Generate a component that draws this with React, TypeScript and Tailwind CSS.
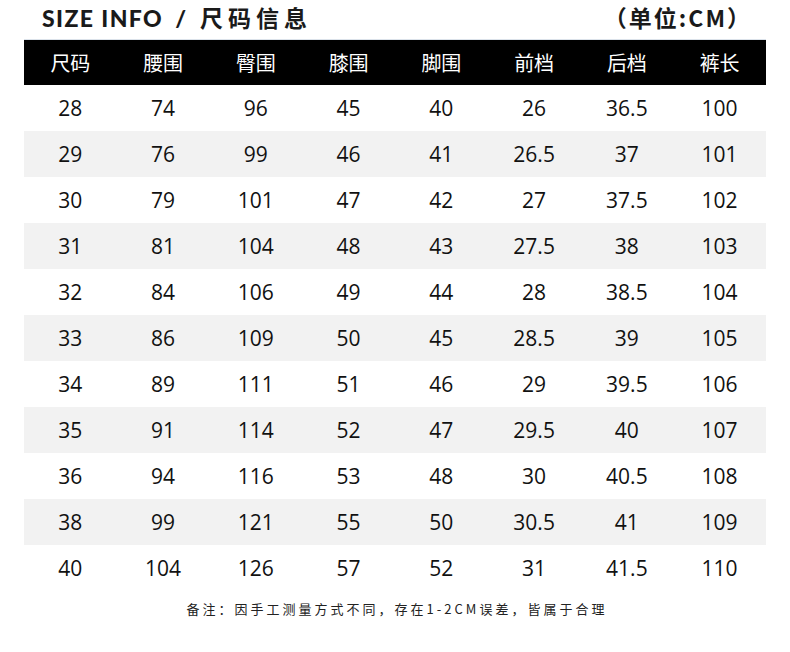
const headers = ['尺码', '腰围', '臀围', '膝围', '脚围', '前档', '后档', '裤长'];

const rows: (string | number)[][] = [
  [28, 74, 96, 45, 40, 26, '36.5', 100],
  [29, 76, 99, 46, 41, '26.5', 37, 101],
  [30, 79, 101, 47, 42, 27, '37.5', 102],
  [31, 81, 104, 48, 43, '27.5', 38, 103],
  [32, 84, 106, 49, 44, 28, '38.5', 104],
  [33, 86, 109, 50, 45, '28.5', 39, 105],
  [34, 89, 111, 51, 46, 29, '39.5', 106],
  [35, 91, 114, 52, 47, '29.5', 40, 107],
  [36, 94, 116, 53, 48, 30, '40.5', 108],
  [38, 99, 121, 55, 50, '30.5', 41, 109],
  [40, 104, 126, 57, 52, 31, '41.5', 110],
];

const cjk = "font-['Microsoft_YaHei','Noto_Sans_CJK_SC',sans-serif]";

export default function App() {
  return (
    <div className="w-[790px] h-[652px] bg-white text-[#111]">
      {/* Title bar */}
      <div className="h-[39px] flex items-start justify-between pt-[3px] pl-[42px] pr-[38px]">
        <h1 className="flex items-baseline text-[#1a1a1a] text-[23px] font-black leading-[28px]">
          <span className="font-['Lato',sans-serif] tracking-[1.4px]">SIZE INFO</span>
          <span className="font-['Lato',sans-serif] ml-[12px] mr-[14px]">/</span>
          <span className={`${cjk} font-bold text-[23px] tracking-[5px]`}>尺码信息</span>
        </h1>
        <div className={`${cjk} text-[23px] font-bold text-[#1a1a1a] leading-[28px] tracking-[2px]`}>
          （单位:CM）
        </div>
      </div>

      {/* Table */}
      <div className="mx-[24px] border-t border-[#dbe2ea]">
        <div className="grid grid-cols-8 h-[45px] bg-black text-white items-center">
          {headers.map((h) => (
            <div key={h} className={`${cjk} text-center text-[20px]`}>
              {h}
            </div>
          ))}
        </div>
        {rows.map((r, i) => (
          <div
            key={i}
            className={`grid grid-cols-8 h-[46px] items-center ${i % 2 === 1 ? 'bg-[#f2f2f2]' : 'bg-white'}`}
          >
            {r.map((v, j) => (
              <div key={j} className="text-center text-[21px] font-['Open_Sans',sans-serif] leading-none">
                {v}
              </div>
            ))}
          </div>
        ))}
      </div>

      {/* Note */}
      <p className={`${cjk} text-center text-[13px] tracking-[3px] text-[#222] mt-[8px] pl-[4px]`}>
        备注：因手工测量方式不同，存在1-2CM误差，皆属于合理
      </p>
    </div>
  );
}
